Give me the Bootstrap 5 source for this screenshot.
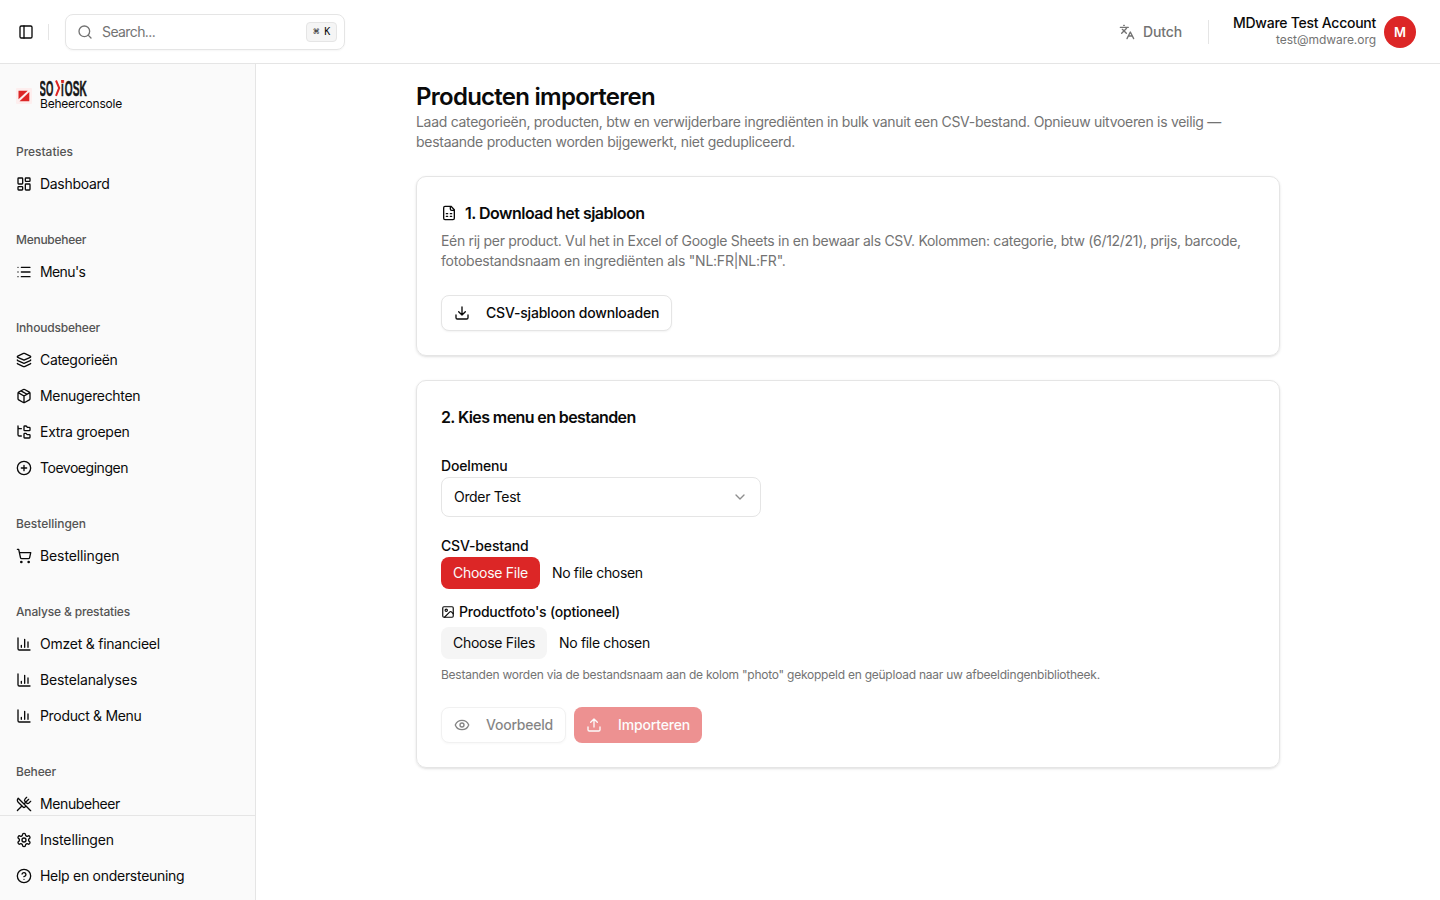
<!DOCTYPE html>
<html lang="nl">
<head>
<meta charset="utf-8">
<meta name="viewport" content="width=device-width, initial-scale=1">
<title>Producten importeren</title>
<link href="https://cdn.jsdelivr.net/npm/bootstrap@5.3.0/dist/css/bootstrap.min.css" rel="stylesheet">
<style>
body{font-family:Inter,"Liberation Sans",sans-serif;font-size:14px;line-height:20px;color:#0a0a0a;height:100vh;overflow:hidden}
svg.ic{width:16px;height:16px;flex:none;fill:none;stroke:currentColor;stroke-width:2;stroke-linecap:round;stroke-linejoin:round}
/* tracking steps, in hundredths of a pixel */
.k3{letter-spacing:-.03px}.k5{letter-spacing:-.05px}.k11{letter-spacing:-.11px}.k13{letter-spacing:-.13px}.k16{letter-spacing:-.16px}.k19{letter-spacing:-.19px}
.k22{letter-spacing:-.22px}.k24{letter-spacing:-.24px}.k26{letter-spacing:-.257px}.k28{letter-spacing:-.28px}.k30{letter-spacing:-.3px}.k33{letter-spacing:-.33px}
.k40{letter-spacing:-.4px}.k47{letter-spacing:-.47px}.k49{letter-spacing:-.51px}.k58{letter-spacing:-.6px}.k73{letter-spacing:-.733px}
.topbar{height:64px;border-bottom:1px solid #e5e5e5;padding:0 24px 0 18px}
.vline{width:1px;background:#e5e5e5}
.vline-sm{height:16px;margin-left:14px}
.vline-lg{height:24px;margin:0 24px 0 26px}
.search-box{width:280px;height:36px;border:1px solid #e5e5e5;border-radius:8px;padding:0 7px 0 11px;margin-left:16px;color:#737373;box-shadow:0 1px 2px rgba(0,0,0,.04)}
.search-box .ic{margin-right:9px}
.key-hint{height:20px;width:31px;border:1px solid #e5e5e5;border-radius:4px;background:#f5f5f5;color:#0a0a0a;font:500 10px/18px "DejaVu Sans Mono",monospace;letter-spacing:-.5px}
.muted{color:#737373}
.fine{font-size:12px;line-height:16px}
.who{padding-bottom:1px}
.avatar{width:32px;height:32px;background:#dc2626;font-weight:600;font-size:13px}
.side{width:256px;background:#fafafa;border-right:1px solid #e5e5e5}
.brand{height:64px;padding:16px 16px 0}
.brand-mark{width:16px;height:16px}
.brand-sub{font-size:12px;line-height:14px}
.side-group{padding:8px 8px}
.side-group+.side-group{margin-top:8px}
.side-label{height:32px;line-height:32px;padding:0 8px;font-size:12px;font-weight:500;color:#545454}
.side .nav-link{height:32px;padding:0 8px;color:#0a0a0a;gap:8px}
.side .nav{gap:4px}
.side-foot{border-top:1px solid #e5e5e5;padding:8px;height:85px;background:#fafafa}
.page{width:864px;padding-top:16px}
h1{font-size:24px;line-height:34px;height:32px;font-weight:600}
.panel{border:1px solid #e5e5e5;border-radius:10px;padding:24px;box-shadow:0 1px 3px rgba(0,0,0,.1),0 1px 2px -1px rgba(0,0,0,.1)}
h2{font-size:16px;line-height:24px;font-weight:600}
.panel-text{margin-top:6px;white-space:nowrap}
.act{height:36px;padding:0 12px;border-radius:8px;font-size:14px;font-weight:500;line-height:20px;gap:16px}
.act-line{border:1px solid #e5e5e5;color:#0a0a0a;background:#fff;box-shadow:0 1px 2px rgba(0,0,0,.05)}
.act-red{background:#dc2626;color:#fafafa}
.dim{opacity:.5}
.pick{width:320px;height:40px;border:1px solid #e5e5e5;border-radius:8px;padding:0 12px}
.pick .ic{opacity:.8}
.lab{height:24px;line-height:26px;font-weight:500}
.photo-lab{height:14px}
.photo-lab .ic{width:14px;height:14px}
.file-btn{height:32px;line-height:32px;padding:0 12px;border-radius:8px;margin-right:12px}
.file-soft{background:#f5f5f5}
</style>
</head>
<body class="d-flex flex-column bg-white">
<svg class="d-none">
<symbol id="chart" viewBox="0 0 24 24"><path d="M3 3v16a2 2 0 0 0 2 2h16M18 17V9M13 17V5M8 17v-3"/></symbol>
</svg>
<header class="topbar d-flex align-items-center flex-shrink-0">
<svg class="ic" viewBox="0 0 24 24"><rect x="3" y="3" width="18" height="18" rx="2"/><path d="M9 3v18"/></svg>
<div class="vline vline-sm"></div>
<div class="search-box d-flex align-items-center">
<svg class="ic" viewBox="0 0 24 24"><circle cx="11" cy="11" r="8"/><path d="m21 21-4.300-4.300"/></svg>
<span class="k58">Search...</span>
<span class="key-hint ms-auto text-center">⌘ K</span>
</div>
<div class="ms-auto d-flex align-items-center">
<svg class="ic muted me-2" viewBox="0 0 24 24"><path d="m5 8 6 6M4 14l6-6 2-3M2 5h12M7 2h1M22 22l-5-10-5 10M14 18h6"/></svg>
<span class="muted k13 fw-medium">Dutch</span>
<div class="vline vline-lg"></div>
<div class="who text-end me-2">
<div class="lh-sm"><span class="k26 fw-medium">MDware Test Account</span></div>
<div class="muted fine"><span class="k5">test@mdware.org</span></div>
</div>
<div class="avatar rounded-circle text-white d-flex align-items-center justify-content-center">M</div>
</div>
</header>
<div class="d-flex flex-grow-1 overflow-hidden">
<aside class="side d-flex flex-column flex-shrink-0">
<div class="flex-grow-1 overflow-hidden">
<div class="brand d-flex gap-2">
<svg class="brand-mark mt-2" viewBox="0 0 16 16"><rect width="16" height="16" rx="1" fill="#fdeeee"/><path d="M2.500 2.700h9.200L2.500 11.200zM13.300 4v9.200H3.500z" fill="#dc2626"/></svg>
<div>
<svg class="d-block" width="48" height="17" viewBox="0 0 48 17" font-family="Liberation Sans,sans-serif" font-weight="700" font-size="21.500" fill="#171717" stroke="#171717" stroke-width=".5"><text transform="translate(-.4 15.800) scale(.44 1)">SO</text><path d="M16 .5l3.200 7.500-3.200 7.800" fill="none" stroke="#dc2626" stroke-width="2"/><text transform="translate(21 15.800) scale(.46 1)">i</text><path d="M21.600 0h2.100v2.800h-2.100z" fill="#dc2626" stroke="#dc2626"/><text transform="translate(24.800 15.800) scale(.47 1)">OSK</text></svg>
<div class="brand-sub"><span class="k22">Beheerconsole</span></div>
</div>
</div>
<div class="side-group"><div class="side-label"><span class="k3">Prestaties</span></div>
<nav class="nav flex-column"><a class="nav-link d-flex align-items-center"><svg class="ic" viewBox="0 0 24 24"><rect x="3" y="3" width="7" height="9" rx="1"/><rect x="14" y="3" width="7" height="5" rx="1"/><rect x="14" y="12" width="7" height="9" rx="1"/><rect x="3" y="16" width="7" height="5" rx="1"/></svg><span class="k30">Dashboard</span></a></nav></div>
<div class="side-group"><div class="side-label"><span class="k28">Menubeheer</span></div>
<nav class="nav flex-column"><a class="nav-link d-flex align-items-center"><svg class="ic" viewBox="0 0 24 24"><path d="M3 5h.01M3 12h.01M3 19h.01M8 5h13M8 12h13M8 19h13"/></svg><span class="k58">Menu's</span></a></nav></div>
<div class="side-group"><div class="side-label"><span class="k19">Inhoudsbeheer</span></div>
<nav class="nav flex-column">
<a class="nav-link d-flex align-items-center"><svg class="ic" viewBox="0 0 24 24"><path d="M12.830 2.180a2 2 0 0 0-1.660 0L2.600 6.080a1 1 0 0 0 0 1.830l8.580 3.910a2 2 0 0 0 1.660 0l8.580-3.900a1 1 0 0 0 0-1.830zM2 12a1 1 0 0 0 .58.910l8.600 3.910a2 2 0 0 0 1.650 0l8.580-3.900A1 1 0 0 0 22 12M2 17a1 1 0 0 0 .58.910l8.600 3.910a2 2 0 0 0 1.650 0l8.580-3.900A1 1 0 0 0 22 17"/></svg><span class="k33">Categorieën</span></a>
<a class="nav-link d-flex align-items-center"><svg class="ic" viewBox="0 0 24 24"><path d="M11 21.730a2 2 0 0 0 2 0l7-4A2 2 0 0 0 21 16V8a2 2 0 0 0-1-1.730l-7-4a2 2 0 0 0-2 0l-7 4A2 2 0 0 0 3 8v8a2 2 0 0 0 1 1.730zM12 22V12M3.290 7 12 12l8.710-5M7.500 4.270l9 5.150"/></svg><span class="k33">Menugerechten</span></a>
<a class="nav-link d-flex align-items-center"><svg class="ic" viewBox="0 0 24 24"><path d="M20 10a1 1 0 0 0 1-1V6a1 1 0 0 0-1-1h-2.500a1 1 0 0 1-.8-.4l-.9-1.200A1 1 0 0 0 15 3h-2a1 1 0 0 0-1 1v5a1 1 0 0 0 1 1ZM20 21a1 1 0 0 0 1-1v-3a1 1 0 0 0-1-1h-2.900a1 1 0 0 1-.88-.55l-.42-.85a1 1 0 0 0-.92-.6H13a1 1 0 0 0-1 1v5a1 1 0 0 0 1 1ZM3 5a2 2 0 0 0 2 2h3M3 3v13a2 2 0 0 0 2 2h3"/></svg><span class="k28">Extra groepen</span></a>
<a class="nav-link d-flex align-items-center"><svg class="ic" viewBox="0 0 24 24"><circle cx="12" cy="12" r="10"/><path d="M8 12h8M12 8v8"/></svg><span class="k47">Toevoegingen</span></a></nav></div>
<div class="side-group"><div class="side-label"><span class="k3">Bestellingen</span></div>
<nav class="nav flex-column"><a class="nav-link d-flex align-items-center"><svg class="ic" viewBox="0 0 24 24"><circle cx="8" cy="21" r="1"/><circle cx="19" cy="21" r="1"/><path d="M2.050 2.050h2l2.660 12.420a2 2 0 0 0 2 1.580h9.780a2 2 0 0 0 1.950-1.570l1.650-7.430H5.120"/></svg><span class="k11">Bestellingen</span></a></nav></div>
<div class="side-group"><div class="side-label"><span class="k16">Analyse &amp; prestaties</span></div>
<nav class="nav flex-column">
<a class="nav-link d-flex align-items-center"><svg class="ic"><use href="#chart"/></svg><span class="k24">Omzet &amp; financieel</span></a>
<a class="nav-link d-flex align-items-center"><svg class="ic"><use href="#chart"/></svg><span class="k13">Bestelanalyses</span></a>
<a class="nav-link d-flex align-items-center"><svg class="ic"><use href="#chart"/></svg><span class="k33">Product &amp; Menu</span></a></nav></div>
<div class="side-group"><div class="side-label"><span class="k16">Beheer</span></div>
<nav class="nav flex-column"><a class="nav-link d-flex align-items-center"><svg class="ic" viewBox="0 0 24 24"><path d="m16 2-2.300 2.300a3 3 0 0 0 0 4.200l1.800 1.800a3 3 0 0 0 4.200 0L22 8M15 15 3.300 3.300a4.200 4.200 0 0 0 0 6l7.300 7.300c.7.700 2 .7 2.800 0L15 15Zm0 0 7 7M2.100 21.800l6.400-6.300M19 5l-7 7"/></svg><span class="k40">Menubeheer</span></a></nav></div>
</div>
<div class="side-foot flex-shrink-0"><nav class="nav flex-column">
<a class="nav-link d-flex align-items-center"><svg class="ic" viewBox="0 0 24 24"><path d="M12.220 2h-.44a2 2 0 0 0-2 2v.18a2 2 0 0 1-1 1.730l-.43.250a2 2 0 0 1-2 0l-.15-.08a2 2 0 0 0-2.730.730l-.22.380a2 2 0 0 0 .73 2.730l.15.100a2 2 0 0 1 1 1.720v.510a2 2 0 0 1-1 1.740l-.15.090a2 2 0 0 0-.73 2.730l.22.380a2 2 0 0 0 2.730.730l.15-.08a2 2 0 0 1 2 0l.43.250a2 2 0 0 1 1 1.730V20a2 2 0 0 0 2 2h.44a2 2 0 0 0 2-2v-.18a2 2 0 0 1 1-1.730l.43-.25a2 2 0 0 1 2 0l.15.080a2 2 0 0 0 2.730-.73l.22-.39a2 2 0 0 0-.73-2.730l-.15-.08a2 2 0 0 1-1-1.740v-.5a2 2 0 0 1 1-1.740l.15-.09a2 2 0 0 0 .73-2.730l-.22-.38a2 2 0 0 0-2.730-.73l-.15.080a2 2 0 0 1-2 0l-.43-.25a2 2 0 0 1-1-1.730V4a2 2 0 0 0-2-2z"/><circle cx="12" cy="12" r="3"/></svg><span class="k13">Instellingen</span></a>
<a class="nav-link d-flex align-items-center"><svg class="ic" viewBox="0 0 24 24"><circle cx="12" cy="12" r="10"/><path d="M9.090 9a3 3 0 0 1 5.830 1c0 2-3 3-3 3M12 17h.01"/></svg><span class="k28">Help en ondersteuning</span></a></nav></div>
</aside>
<main class="flex-grow-1">
<div class="page mx-auto">
<h1 class="m-0"><span class="k73">Producten importeren</span></h1>
<p class="muted mb-4"><span class="k30">Laad categorieën, producten, btw en verwijderbare ingrediënten in bulk vanuit een CSV-bestand. Opnieuw uitvoeren is veilig —</span><br><span class="k28">bestaande producten worden bijgewerkt, niet gedupliceerd.</span></p>
<section class="panel mb-4">
<h2 class="d-flex align-items-center gap-2 m-0"><svg class="ic" viewBox="0 0 24 24"><path d="M15 2H6a2 2 0 0 0-2 2v16a2 2 0 0 0 2 2h12a2 2 0 0 0 2-2V7ZM14 2v4a2 2 0 0 0 2 2h4M8 13h2M14 13h2M8 17h2M14 17h2"/></svg><span class="k49">1. Download het sjabloon</span></h2>
<p class="panel-text muted mb-4"><span class="k30">Eén rij per product. Vul het in Excel of Google Sheets in en bewaar als CSV. Kolommen: categorie, btw (6/12/21), prijs, barcode,</span><br><span class="k24">fotobestandsnaam en ingrediënten als "NL:FR|NL:FR".</span></p>
<button class="btn act act-line d-inline-flex align-items-center"><svg class="ic" viewBox="0 0 24 24"><path d="M21 15v4a2 2 0 0 1-2 2H5a2 2 0 0 1-2-2v-4M7 10l5 5 5-5M12 15V3"/></svg><span class="k19">CSV-sjabloon downloaden</span></button>
</section>
<section class="panel">
<h2 class="mb-4"><span class="k58">2. Kies menu en bestanden</span></h2>
<div class="lab"><span class="k16">Doelmenu</span></div>
<div class="pick d-flex align-items-center justify-content-between mb-3"><span class="k33">Order Test</span><svg class="ic muted" viewBox="0 0 24 24"><path d="m6 9 6 6 6-6"/></svg></div>
<div class="lab"><span class="k16">CSV-bestand</span></div>
<div class="d-flex align-items-center mb-3"><span class="file-btn act-red"><span class="k28">Choose File</span></span><span class="k33">No file chosen</span></div>
<div class="photo-lab d-flex align-items-center fw-medium gap-1 mb-2"><svg class="ic" viewBox="0 0 24 24"><rect x="3" y="3" width="18" height="18" rx="2"/><circle cx="9" cy="9" r="2"/><path d="m21 15-3.100-3.100a2 2 0 0 0-2.800 0L6 21"/></svg><span class="k22">Productfoto's (optioneel)</span></div>
<div class="d-flex align-items-center mb-2"><span class="file-btn file-soft"><span class="k28">Choose Files</span></span><span class="k33">No file chosen</span></div>
<p class="muted fine mb-4"><span class="k24">Bestanden worden via de bestandsnaam aan de kolom "photo" gekoppeld en geüpload naar uw afbeeldingenbibliotheek.</span></p>
<div class="d-flex gap-2">
<button class="btn act act-line dim d-inline-flex align-items-center"><svg class="ic" viewBox="0 0 24 24"><path d="M2.060 12.350a1 1 0 0 1 0-.7 10.750 10.750 0 0 1 19.880 0 1 1 0 0 1 0 .7 10.750 10.750 0 0 1-19.880 0"/><circle cx="12" cy="12" r="3"/></svg><span class="k22">Voorbeeld</span></button>
<button class="btn act act-red dim d-inline-flex align-items-center border-0"><svg class="ic" viewBox="0 0 24 24"><path d="M21 15v4a2 2 0 0 1-2 2H5a2 2 0 0 1-2-2v-4M17 8l-5-5-5 5M12 3v12"/></svg><span class="k16">Importeren</span></button>
</div>
</section>
</div>
</main>
</div>
<script src="https://cdn.jsdelivr.net/npm/bootstrap@5.3.0/dist/js/bootstrap.bundle.min.js"></script>
</body>
</html>
